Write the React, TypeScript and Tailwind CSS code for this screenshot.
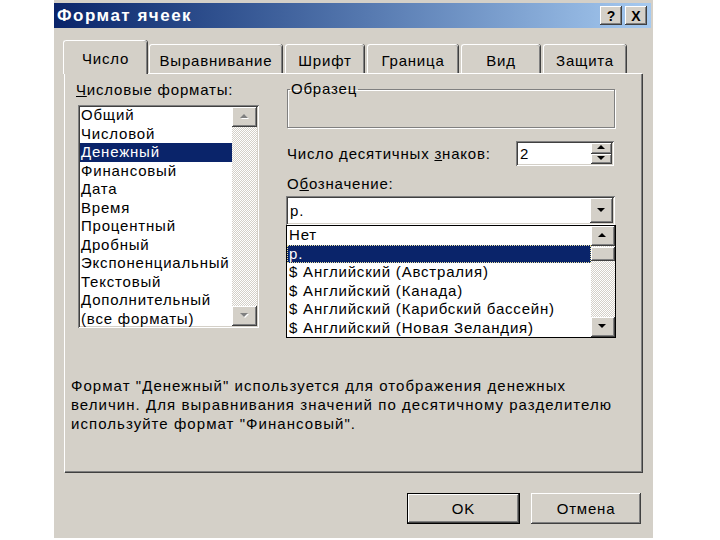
import type { ReactNode } from 'react';

const raised =
  'shadow-[inset_-1px_-1px_#404040,inset_1px_1px_#ffffff,inset_-2px_-2px_#808080,inset_2px_2px_#d4d0c8]';
const sunken =
  'shadow-[inset_1px_1px_#808080,inset_-1px_-1px_#ffffff,inset_2px_2px_#404040,inset_-2px_-2px_#d4d0c8]';
const checker =
  'bg-[repeating-conic-gradient(#ffffff_0%_25%,#d4d0c8_0%_50%)] bg-[length:2px_2px]';

const formats = [
  'Общий',
  'Числовой',
  'Денежный',
  'Финансовый',
  'Дата',
  'Время',
  'Процентный',
  'Дробный',
  'Экспоненциальный',
  'Текстовый',
  'Дополнительный',
  '(все форматы)',
];

const symbols = [
  'Нет',
  'р.',
  '$ Английский (Австралия)',
  '$ Английский (Канада)',
  '$ Английский (Карибский бассейн)',
  '$ Английский (Новая Зеландия)',
];

const tabs = [
  { label: 'Выравнивание', w: 'w-[133px]' },
  { label: 'Шрифт', w: 'w-[79px]' },
  { label: 'Граница', w: 'w-[91px]' },
  { label: 'Вид', w: 'w-[79px]' },
  { label: 'Защита', w: 'w-[83px]' },
];

const Arrow = ({ dir, disabled }: { dir: 'up' | 'down'; disabled?: boolean }) => {
  const pts = dir === 'up' ? '4,0 8,4 0,4' : '0,0 8,0 4,4';
  return (
    <svg width="10" height="6" viewBox="0 0 10 6">
      {disabled && <polygon points={pts} fill="#ffffff" transform="translate(1,1)" />}
      <polygon points={pts} fill={disabled ? '#808080' : '#000000'} />
    </svg>
  );
};

const ScrollBtn = ({ children, h = 'h-[20px]' }: { children: ReactNode; h?: string }) => (
  <div className={`${h} w-full shrink-0 flex items-center justify-center bg-[#d4d0c8] ${raised}`}>{children}</div>
);

const Tab = ({ label, w }: { label: string; w: string }) => (
  <div
    className={`${w} h-[30px] mr-[3px] flex items-center justify-center rounded-t-[3px] border-t border-l border-white shadow-[inset_-1px_0_#808080,1px_0_#404040] pt-[3px]`}
  >
    {label}
  </div>
);

export default function App() {
  return (
    <div className="w-[720px] h-[540px] bg-white pl-[54px] text-[15px] leading-[18px] tracking-[0.8px] text-black font-['Liberation_Sans',Arial,sans-serif]">
      <div className="w-[599px] h-[538px] bg-[#d4d0c8] flex flex-col pt-[3px]">
        {/* title bar */}
        <div className="h-[25px] mr-[2px] flex items-center justify-between bg-gradient-to-r from-[#0a246a] to-[#a6caf0] pl-[3px] pr-[4px]">
          <span className="text-white font-bold text-[17px] tracking-[1.5px] pt-[1px]">Формат ячеек</span>
          <div className="flex gap-[3px] tracking-normal">
            <div className={`w-[22px] h-[19px] flex items-center justify-center bg-[#d4d0c8] font-bold text-[14px] ${raised}`}>?</div>
            <div className={`w-[22px] h-[19px] flex items-center justify-center bg-[#d4d0c8] font-bold text-[14px] ${raised}`}>X</div>
          </div>
        </div>

        {/* tabs */}
        <div className="flex items-end h-[34px] mt-[12px] pl-[9px]">
          <div className="relative z-10 w-[84px] h-[34px] mr-[2px] flex items-center justify-center bg-[#d4d0c8] rounded-t-[3px] border-t border-l border-white shadow-[inset_-1px_0_#808080,1px_0_#404040] pt-[3px]">
            Число
          </div>
          {tabs.map((t) => (
            <Tab key={t.label} label={t.label} w={t.w} />
          ))}
        </div>

        {/* panel */}
        <div className="-mt-[1px] ml-[10px] w-[578px] h-[399px] border-t border-l border-white shadow-[inset_-1px_-1px_#808080,1px_1px_#404040] flex flex-col pt-[7px] pl-[11px]">
          <div className="flex">
            {/* left column */}
            <div className="w-[210px] flex flex-col">
              <div>
                <u>Ч</u>исловые форматы:
              </div>
              <div className={`mt-[6px] ml-[2px] w-[181px] h-[223px] bg-white flex p-[2px] ${sunken}`}>
                <div className="flex-1 flex flex-col -mt-[1px]">
                  {formats.map((f) => (
                    <div
                      key={f}
                      className={`h-[18.5px] shrink-0 leading-[18.5px] pl-[1px] whitespace-nowrap ${
                        f === 'Денежный' ? 'bg-[#0a246a] text-white' : ''
                      }`}
                    >
                      {f}
                    </div>
                  ))}
                </div>
                <div className={`w-[25px] flex flex-col ${checker}`}>
                  <ScrollBtn>
                    <Arrow dir="up" disabled />
                  </ScrollBtn>
                  <div className="flex-1" />
                  <ScrollBtn>
                    <Arrow dir="down" disabled />
                  </ScrollBtn>
                </div>
              </div>
            </div>

            {/* right column */}
            <div className="w-[330px] flex flex-col">
              <fieldset className="-mt-[1px] ml-[1px] w-[328px] h-[48px] border border-[#808080] shadow-[inset_1px_1px_#ffffff,1px_1px_#ffffff] px-0">
                <legend className="ml-[2px] px-[1px]">Образец</legend>
              </fieldset>

              <div className="mt-[13px] flex items-center justify-between">
                <div className="pl-[1px]">
                  Число десятичных <u>з</u>наков:
                </div>
                <div className={`w-[98px] h-[25px] bg-white flex p-[2px] mr-[2px] ${sunken}`}>
                  <div className="flex-1 pl-[2px] leading-[21px]">2</div>
                  <div className="w-[21px] flex flex-col">
                    <ScrollBtn h="h-[10.5px]">
                      <Arrow dir="up" />
                    </ScrollBtn>
                    <ScrollBtn h="h-[10.5px]">
                      <Arrow dir="down" />
                    </ScrollBtn>
                  </div>
                </div>
              </div>

              <div className="mt-[9px] pl-[1px]">
                О<u>б</u>означение:
              </div>
              <div className={`mt-[3px] w-[329px] h-[29px] bg-white flex p-[2px] ${sunken}`}>
                <div className="flex-1 pl-[2px] leading-[25px]">р.</div>
                <div className={`w-[23px] flex items-center justify-center bg-[#d4d0c8] ${raised}`}>
                  <Arrow dir="down" />
                </div>
              </div>
              <div className="w-[330px] h-[113px] border border-black bg-white flex">
                <div className="flex-1 flex flex-col">
                  {symbols.map((s) => (
                    <div
                      key={s}
                      className={`h-[18.6px] shrink-0 leading-[18.6px] pl-[2px] whitespace-nowrap ${
                        s === 'р.' ? 'bg-[#0a246a] text-white outline-1 outline-dotted outline-[#e8e0a0] -outline-offset-1' : ''
                      }`}
                    >
                      {s}
                    </div>
                  ))}
                </div>
                <div className={`w-[24px] flex flex-col ${checker}`}>
                  <ScrollBtn>
                    <Arrow dir="up" />
                  </ScrollBtn>
                  <div className={`mt-[1px] h-[14px] bg-[#d4d0c8] ${raised}`} />
                  <div className="flex-1" />
                  <ScrollBtn>
                    <Arrow dir="down" />
                  </ScrollBtn>
                </div>
              </div>
            </div>
          </div>

          <p className="mt-[38px] -ml-[5px] leading-[19px] tracking-[1.05px]">
            Формат "Денежный" используется для отображения денежных
            <br />
            величин. Для выравнивания значений по десятичному разделителю
            <br />
            используйте формат "Финансовый".
          </p>
        </div>

        {/* buttons */}
        <div className="mt-[21px] flex justify-end gap-[11px] pr-[12px]">
          <div className="w-[113px] h-[31px] border border-black">
            <div className={`w-full h-full flex items-center justify-center bg-[#d4d0c8] ${raised}`}>OK</div>
          </div>
          <div className={`w-[110px] h-[31px] flex items-center justify-center bg-[#d4d0c8] ${raised}`}>Отмена</div>
        </div>
      </div>
    </div>
  );
}
